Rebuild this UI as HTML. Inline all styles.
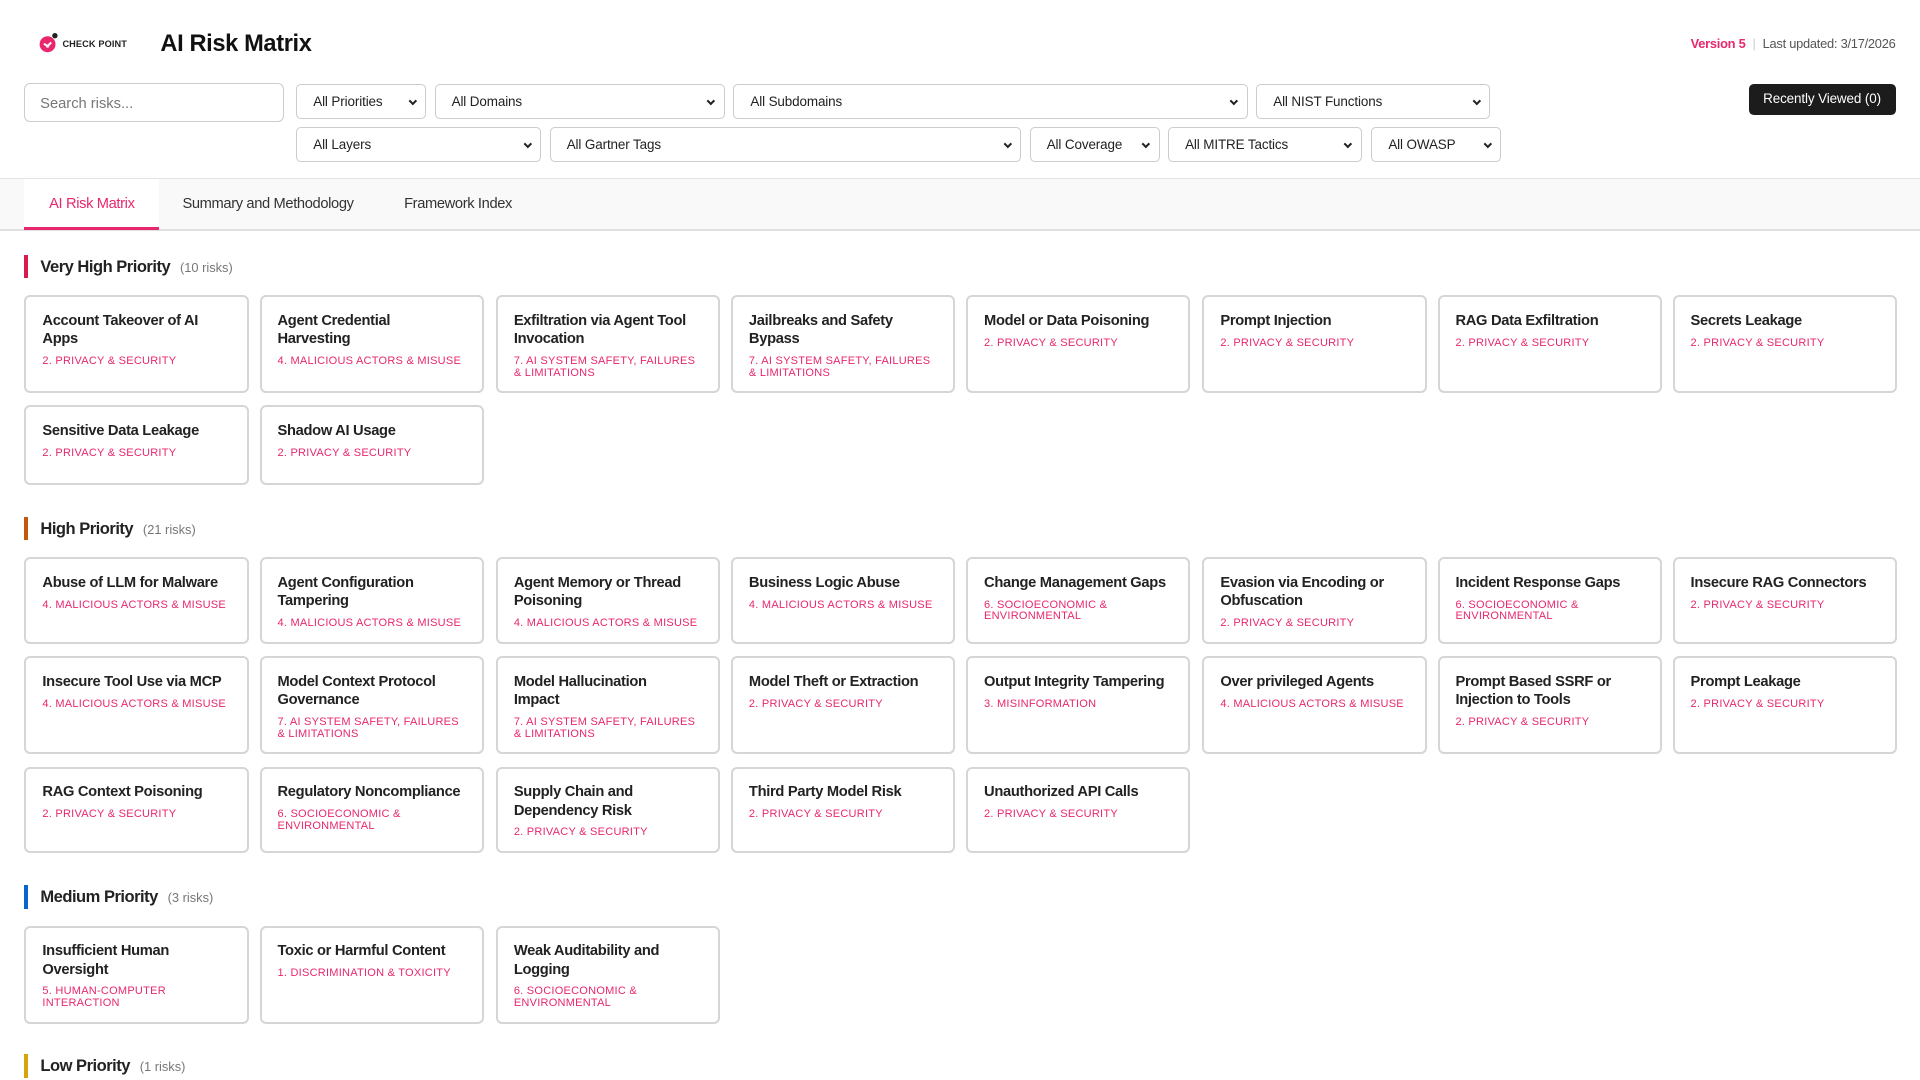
<!DOCTYPE html>
<html><head><meta charset="utf-8">
<style>
*{box-sizing:border-box;margin:0;padding:0}
html,body{width:1920px;height:1080px;overflow:hidden;background:#fff}
body{font-family:"Liberation Sans",Arial,sans-serif;color:#222}
#w{zoom:1.22449;width:1568px;height:882px;position:relative}
.abs{position:absolute}
.sel{position:absolute;height:28px;border:1px solid #ccc;border-radius:4px;background:#fff;font-size:11px;color:#222;padding-left:13px;line-height:27px;letter-spacing:-.1px}
.sel:after{content:"";position:absolute;right:8px;top:10px;width:3px;height:3px;border-right:2px solid #222;border-bottom:2px solid #222;transform:rotate(45deg)}
.sec{position:absolute;left:20px}
.sec .h{position:absolute;left:0;height:19px;width:3px}
.sec .t{position:absolute;left:13px;font-size:13.5px;font-weight:bold;line-height:19px;white-space:nowrap;letter-spacing:-.4px}
.sec .t span{font-size:10.5px;font-weight:normal;color:#777;margin-left:8px;letter-spacing:0}
.card{position:absolute;width:183px;border:2px solid #d6d6d6;border-radius:5px;padding:12px 10px 0 13px;background:#fff}
.card b{display:block;font-size:12px;line-height:15px;color:#222;letter-spacing:-.25px}
.card i{display:block;font-style:normal;font-size:9px;line-height:9.5px;color:#e8276e;text-transform:uppercase;letter-spacing:.2px;margin-top:6px}
</style></head><body><div id="w">
<svg class="abs" style="left:32px;top:26px" width="16" height="18" viewBox="0 0 16 18"><circle cx="7" cy="10" r="6.5" fill="#e8276e"/><circle cx="13" cy="3" r="2.2" fill="#222"/><path d="M4 9.5 L7 11.5 L10 8.5" stroke="#fff" stroke-width="1.6" fill="none"/><circle cx="7" cy="11.5" r="1.3" fill="#fff"/></svg>
<div class="abs" style="left:51px;top:32px;font-size:7.5px;font-weight:bold;color:#222;letter-spacing:.1px">CHECK POINT</div>
<div class="abs" style="left:131px;top:25px;font-size:19.3px;font-weight:bold;color:#111;letter-spacing:-.3px">AI Risk Matrix</div>
<div class="abs" style="right:20px;top:29px;font-size:10.5px;color:#555;letter-spacing:-.2px"><span style="color:#e8276e;font-weight:bold">Version 5</span> <span style="color:#ccc;margin:0 3px">|</span> Last updated: 3/17/2026</div>
<div class="abs" style="left:20px;top:68px;width:212px;height:32px;border:1px solid #ccc;border-radius:5px;font-size:12px;color:#777;padding:10px 12px 0">Search risks...</div>
<div class="sel" style="left:242px;top:69px;width:106px">All Priorities</div>
<div class="sel" style="left:355px;top:69px;width:237px">All Domains</div>
<div class="sel" style="left:599px;top:69px;width:420px">All Subdomains</div>
<div class="sel" style="left:1026px;top:69px;width:191px">All NIST Functions</div>
<div class="sel" style="left:242px;top:104px;width:200px">All Layers</div>
<div class="sel" style="left:449px;top:104px;width:385px">All Gartner Tags</div>
<div class="sel" style="left:841px;top:104px;width:106px">All Coverage</div>
<div class="sel" style="left:954px;top:104px;width:158px">All MITRE Tactics</div>
<div class="sel" style="left:1120px;top:104px;width:106px">All OWASP</div>
<div class="abs" style="left:1428px;top:69px;width:120px;height:25px;background:#1c1c1c;border-radius:4px;color:#fff;font-size:11px;text-align:center;line-height:25px;letter-spacing:-.1px">Recently Viewed (0)</div>
<div class="abs" style="left:0;top:145px;width:1568px;height:44px;background:#f9f9f9;border-top:1px solid #e4e4e4;border-bottom:2px solid #e0e0e0"></div>
<div class="abs" style="left:20px;top:146px;width:110px;height:42px;background:#fff;border-bottom:3px solid #e8276e;color:#e8276e;font-size:12px;text-align:center;line-height:41px;letter-spacing:-.3px">AI Risk Matrix</div>
<div class="abs" style="left:149px;top:146px;font-size:12px;line-height:41px;color:#333;letter-spacing:-.3px">Summary and Methodology</div>
<div class="abs" style="left:330px;top:146px;font-size:12px;line-height:41px;color:#333;letter-spacing:-.3px">Framework Index</div>

<div class="sec" style="top:208px"><div class="h" style="background:#d81b4f"></div><div class="t">Very High Priority<span>(10 risks)</span></div></div>
<div class="sec" style="top:422px"><div class="h" style="background:#c05a10"></div><div class="t">High Priority<span>(21 risks)</span></div></div>
<div class="sec" style="top:723px"><div class="h" style="background:#0b63ce"></div><div class="t">Medium Priority<span>(3 risks)</span></div></div>
<div class="sec" style="top:861px"><div class="h" style="background:#d4a50c"></div><div class="t">Low Priority<span>(1 risks)</span></div></div>

<div id="cards"></div>
<script>
var X=[20,212,405,597,789,982,1174,1366];
var rows=[
[241,80,[["Account Takeover of AI Apps","2. Privacy & Security"],["Agent Credential<br>Harvesting","4. Malicious Actors & Misuse"],["Exfiltration via Agent Tool Invocation","7. AI System Safety, Failures & Limitations"],["Jailbreaks and Safety Bypass","7. AI System Safety, Failures & Limitations"],["Model or Data Poisoning","2. Privacy & Security"],["Prompt Injection","2. Privacy & Security"],["RAG Data Exfiltration","2. Privacy & Security"],["Secrets Leakage","2. Privacy & Security"]]],
[331,65,[["Sensitive Data Leakage","2. Privacy & Security"],["Shadow AI Usage","2. Privacy & Security"]]],
[455,71,[["Abuse of LLM for Malware","4. Malicious Actors & Misuse"],["Agent Configuration Tampering","4. Malicious Actors & Misuse"],["Agent Memory or Thread Poisoning","4. Malicious Actors & Misuse"],["Business Logic Abuse","4. Malicious Actors & Misuse"],["Change Management Gaps","6. Socioeconomic & Environmental"],["Evasion via Encoding or Obfuscation","2. Privacy & Security"],["Incident Response Gaps","6. Socioeconomic & Environmental"],["Insecure RAG Connectors","2. Privacy & Security"]]],
[536,80,[["Insecure Tool Use via MCP","4. Malicious Actors & Misuse"],["Model Context Protocol Governance","7. AI System Safety, Failures & Limitations"],["Model Hallucination<br>Impact","7. AI System Safety, Failures & Limitations"],["Model Theft or Extraction","2. Privacy & Security"],["Output Integrity Tampering","3. Misinformation"],["Over privileged Agents","4. Malicious Actors & Misuse"],["Prompt Based SSRF or Injection to Tools","2. Privacy & Security"],["Prompt Leakage","2. Privacy & Security"]]],
[626,71,[["RAG Context Poisoning","2. Privacy & Security"],["Regulatory Noncompliance","6. Socioeconomic & Environmental"],["Supply Chain and Dependency Risk","2. Privacy & Security"],["Third Party Model Risk","2. Privacy & Security"],["Unauthorized API Calls","2. Privacy & Security"]]],
[756,80,[["Insufficient Human Oversight","5. Human-Computer Interaction"],["Toxic or Harmful Content","1. Discrimination & Toxicity"],["Weak Auditability and Logging","6. Socioeconomic & Environmental"]]]
];
var h="";
rows.forEach(function(r){r[2].forEach(function(c,i){h+='<div class="card" style="left:'+X[i]+'px;top:'+r[0]+'px;height:'+r[1]+'px"><b>'+c[0]+'</b><i>'+c[1].replace(/&/g,"&amp;")+'</i></div>';});});
document.getElementById("cards").innerHTML=h;
</script>
</div></body></html>
